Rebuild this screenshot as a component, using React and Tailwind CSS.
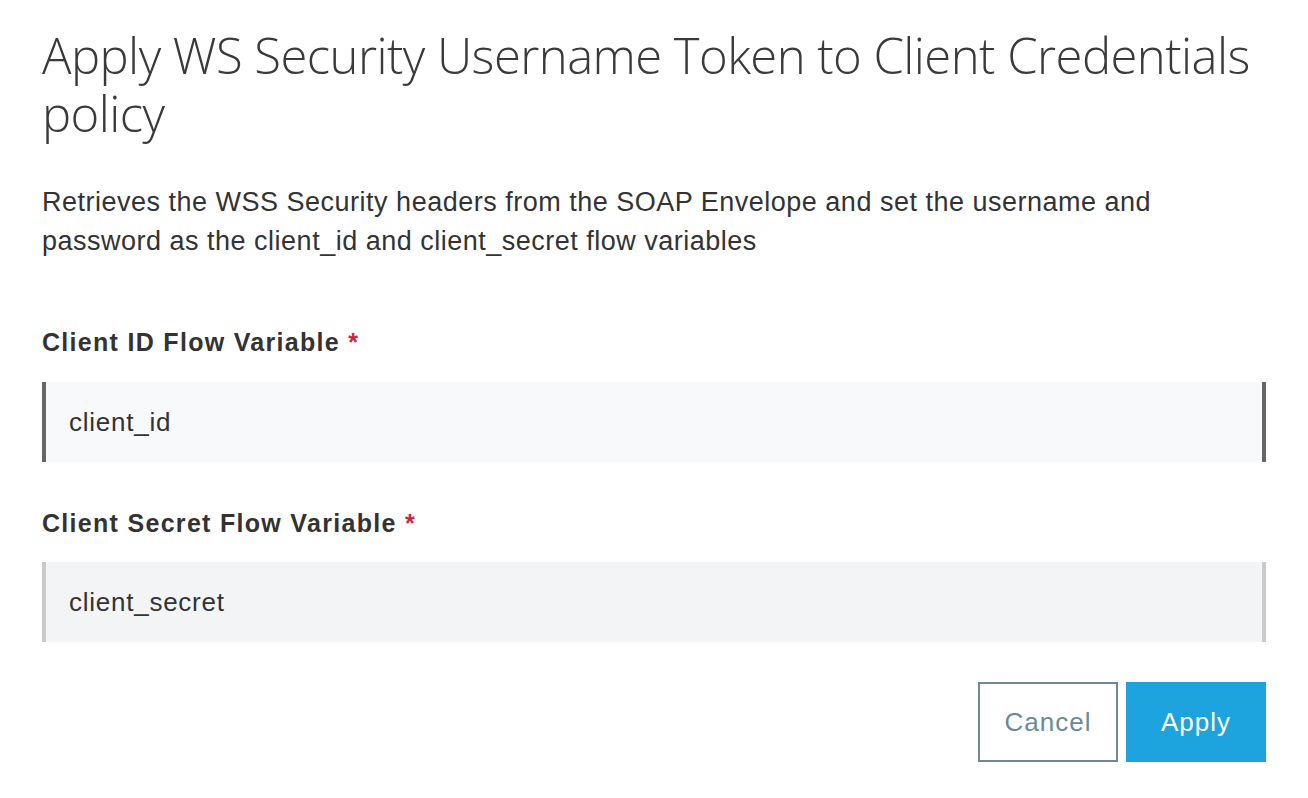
export default function App() {
  return (
    <div className="min-h-screen bg-white px-[42px] pt-[26px] text-[#333]">
      <h1 className="font-['Open_Sans',sans-serif] text-[49px] font-light leading-[58px] tracking-[-0.55px] text-[#3a3a3a]">
        Apply WS Security Username Token to Client Credentials policy
      </h1>
      <p className="mt-[41px] font-['Liberation_Sans',Arial,sans-serif] text-[27px] leading-[39px] tracking-[0.5px] text-[#333]">
        Retrieves the WSS Security headers from the SOAP Envelope and set the username and password as the client_id and client_secret flow variables
      </p>

      <div className="mt-[63px] font-['Liberation_Sans',Arial,sans-serif]">
        <label className="block text-[25px] font-bold leading-[36px] tracking-[1.3px] text-[#333]">
          Client ID Flow Variable <span className="text-[#d0243c]">*</span>
        </label>
        <div className="mt-[22px] flex h-[80px] items-center border-x-4 border-[#666] bg-[#f8f9fa] px-[23px] text-[26px] tracking-[0.75px] text-[#333]">
          client_id
        </div>

        <label className="mt-[43px] block text-[25px] font-bold leading-[36px] tracking-[1.3px] text-[#333]">
          Client Secret Flow Variable <span className="text-[#d0243c]">*</span>
        </label>
        <div className="mt-[21px] flex h-[80px] items-center border-x-4 border-[#cacaca] bg-[#f3f4f6] px-[23px] text-[26px] tracking-[0.75px] text-[#333]">
          client_secret
        </div>

        <div className="mt-[40px] flex justify-end gap-[8px]">
          <button className="h-[80px] w-[140px] border-2 border-[#6b8a99] bg-white text-[26px] tracking-[1px] text-[#6b8a99]">
            Cancel
          </button>
          <button className="h-[80px] w-[140px] bg-[#1da3dd] text-[26px] tracking-[1px] text-white">
            Apply
          </button>
        </div>
      </div>
    </div>
  );
}
